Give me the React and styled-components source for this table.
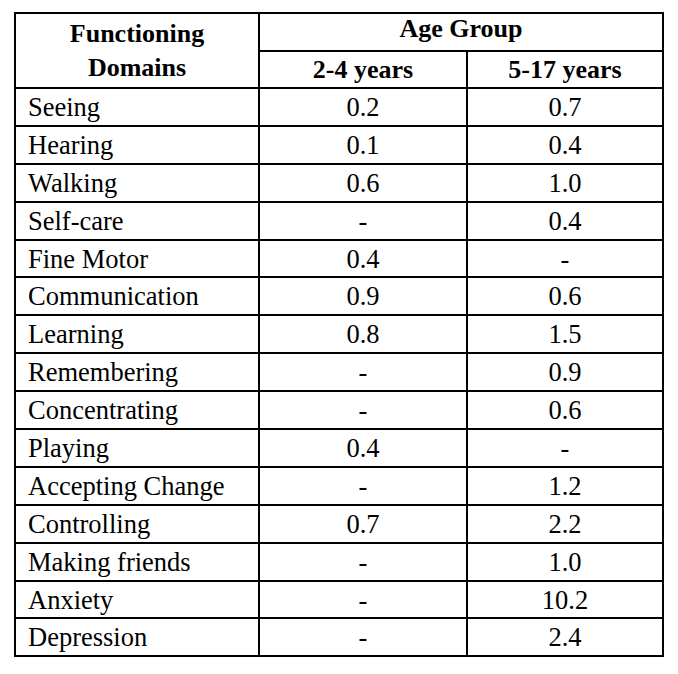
import React from "react";
import styled, { createGlobalStyle } from "styled-components";

const rows = [
  ["Seeing", "0.2", "0.7"],
  ["Hearing", "0.1", "0.4"],
  ["Walking", "0.6", "1.0"],
  ["Self-care", "-", "0.4"],
  ["Fine Motor", "0.4", "-"],
  ["Communication", "0.9", "0.6"],
  ["Learning", "0.8", "1.5"],
  ["Remembering", "-", "0.9"],
  ["Concentrating", "-", "0.6"],
  ["Playing", "0.4", "-"],
  ["Accepting Change", "-", "1.2"],
  ["Controlling", "0.7", "2.2"],
  ["Making friends", "-", "1.0"],
  ["Anxiety", "-", "10.2"],
  ["Depression", "-", "2.4"],
];

export default function App() {
  return (
    <>
      <GlobalStyle />
      <Table>
        <colgroup>
          <col style={{ width: 244 }} />
          <col style={{ width: 208 }} />
          <col style={{ width: 196 }} />
        </colgroup>
        <thead>
          <tr>
            <HeadCell rowSpan={2}>
              Functioning
              <br />
              Domains
            </HeadCell>
            <HeadCell colSpan={2} $raised>
              Age Group
            </HeadCell>
          </tr>
          <tr>
            <HeadCell>2-4 years</HeadCell>
            <HeadCell>5-17 years</HeadCell>
          </tr>
        </thead>
        <tbody>
          {rows.map(([name, young, old]) => (
            <tr key={name}>
              <NameCell>{name}</NameCell>
              <ValueCell>{young}</ValueCell>
              <ValueCell>{old}</ValueCell>
            </tr>
          ))}
        </tbody>
      </Table>
    </>
  );
}

const GlobalStyle = createGlobalStyle`
  body {
    margin: 0;
    background: #fff;
    color: #000;
    font-family: "Liberation Serif", "Times New Roman", serif;
  }
`;

const Table = styled.table`
  margin: 12px 0 0 14px;
  width: 648px;
  table-layout: fixed;
  border-collapse: collapse;
  border: 2px solid #000;
  font-size: 26.5px;
`;

const Cell = styled.td`
  border: 2px solid #000;
  height: 35.9px;
  padding: 0;
  line-height: 34px;
  vertical-align: middle;
`;

const HeadCell = styled(Cell).attrs({ as: "th" })`
  font-weight: bold;
  font-size: 26px;
  text-align: center;
  height: ${(p) => (p.$raised ? "30px" : "35px")};
  line-height: ${(p) => (p.$raised ? "30px" : "34px")};
  padding-bottom: ${(p) => (p.$raised ? "6px" : "0")};
`;

const NameCell = styled(Cell)`
  text-align: left;
  padding-left: 12px;
  white-space: nowrap;
`;

const ValueCell = styled(Cell)`
  text-align: center;
`;
